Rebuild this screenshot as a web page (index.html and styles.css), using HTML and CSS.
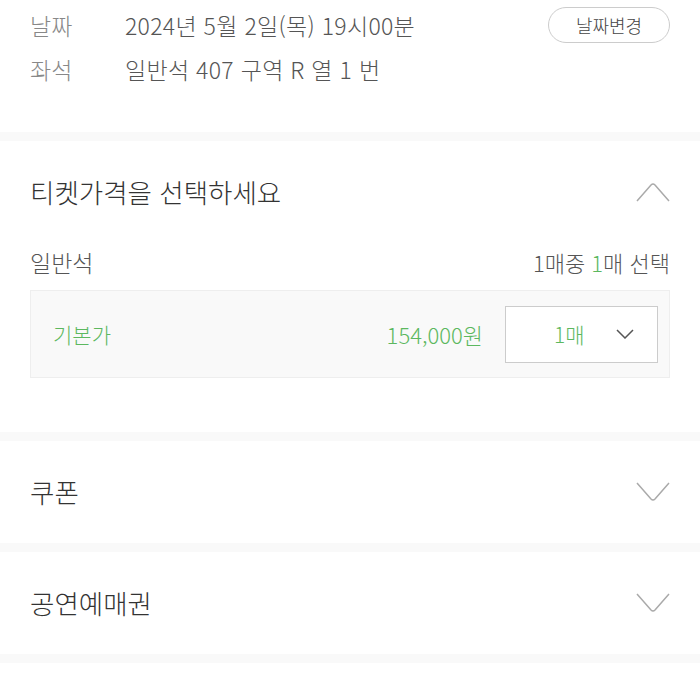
FILE: index.html
```html
<!DOCTYPE html>
<html lang="ko">
  <head>
    <meta charset="utf-8"/>
    <title>티켓가격 선택</title>
    <link rel="stylesheet" href="styles.css">
  </head>

  <body>
    <section class="info">
      <div class="info-row">
        <span class="info-label">날짜</span>
        <span class="info-value">2024년 5월 2일(목) 19시00분</span>
        <button class="change-btn">날짜변경</button>
      </div>
      <div class="info-row">
        <span class="info-label">좌석</span>
        <span class="info-value">일반석 407 구역 R 열 1 번</span>
      </div>
    </section>

    <div class="divider"></div>

    <section class="panel open">
      <div class="panel-head">
        <h2>티켓가격을 선택하세요</h2>
        <svg class="chev" width="34" height="20" viewBox="0 0 34 20">
          <path d="M1 19 L15 3 Q17 1 19 3 L33 19" fill="none" stroke="#aaa" stroke-width="1.5"/>
        </svg>
      </div>
      <div class="grade">
        <span class="grade-name">일반석</span>
        <span class="grade-count">1매중 <em>1</em>매 선택</span>
      </div>
      <div class="price-box">
        <span class="price-name">기본가</span>
        <span class="price">154,000원</span>
        <div class="qty">
          <span class="qty-value">1매</span>
          <svg width="18" height="10" viewBox="0 0 18 10">
            <path d="M1 1 L9 9 L17 1" fill="none" stroke="#555" stroke-width="1.5"/>
          </svg>
        </div>
      </div>
    </section>

    <div class="divider"></div>

    <section class="panel">
      <div class="panel-head">
        <h2>쿠폰</h2>
        <svg class="chev" width="34" height="20" viewBox="0 0 34 20">
          <path d="M1 1 L15 17 Q17 19 19 17 L33 1" fill="none" stroke="#aaa" stroke-width="1.5"/>
        </svg>
      </div>
    </section>

    <div class="divider"></div>

    <section class="panel">
      <div class="panel-head">
        <h2>공연예매권</h2>
        <svg class="chev" width="34" height="20" viewBox="0 0 34 20">
          <path d="M1 1 L15 17 Q17 19 19 17 L33 1" fill="none" stroke="#aaa" stroke-width="1.5"/>
        </svg>
      </div>
    </section>

    <div class="divider"></div>
  </body>
</html>
```

FILE: styles.css
```css
* {
  box-sizing: border-box;
}

body {
  margin: 0;
  background-color: #fff;
  color: #333;
  font-family: "Noto Sans CJK KR", "Noto Sans", sans-serif;
  font-weight: 300;
}

.info {
  padding: 3px 30px 41px;
}

.info-row {
  display: flex;
  align-items: center;
  height: 44px;
  font-size: 23px;
}

.info-label {
  width: 95px;
  color: #888;
}

.info-value {
  color: #555;
  flex: 1;
  letter-spacing: 0.3px;
}

.change-btn {
  font-family: inherit;
  font-weight: 300;
  font-size: 18px;
  color: #444;
  background: #fff;
  border: 1px solid #ccc;
  border-radius: 18px;
  width: 122px;
  height: 36px;
  padding: 0;
}

.divider {
  height: 9px;
  background-color: #f9f9f9;
}

.panel {
  padding: 0 30px;
}

.panel-head {
  display: flex;
  justify-content: space-between;
  align-items: center;
  height: 102px;
}

.panel-head h2 {
  margin: 0 0 2px;
  font-size: 26.5px;
  font-weight: 300;
  color: #333;
}

.chev {
  display: block;
}

.grade {
  display: flex;
  justify-content: space-between;
  align-items: center;
  height: 38px;
  font-size: 23px;
  color: #555;
  margin-bottom: 9px;
}

.grade-count {
  font-size: 22px;
}

.grade-count em {
  font-style: normal;
  color: #5cb85f;
}

.price-box {
  display: flex;
  align-items: center;
  height: 88px;
  padding: 0 11px 0 22px;
  background-color: #f9f9f9;
  border: 1px solid #eee;
  margin-bottom: 54px;
  color: #5cb85f;
  font-size: 21px;
}

.price-name {
  flex: 1;
}

.price {
  margin-right: 22px;
  font-size: 22px;
}

.qty {
  display: flex;
  align-items: center;
  justify-content: space-between;
  width: 153px;
  height: 57px;
  padding: 0 23px 0 48px;
  background-color: #fff;
  border: 1px solid #ccc;
}

.qty svg {
  display: block;
}
```
